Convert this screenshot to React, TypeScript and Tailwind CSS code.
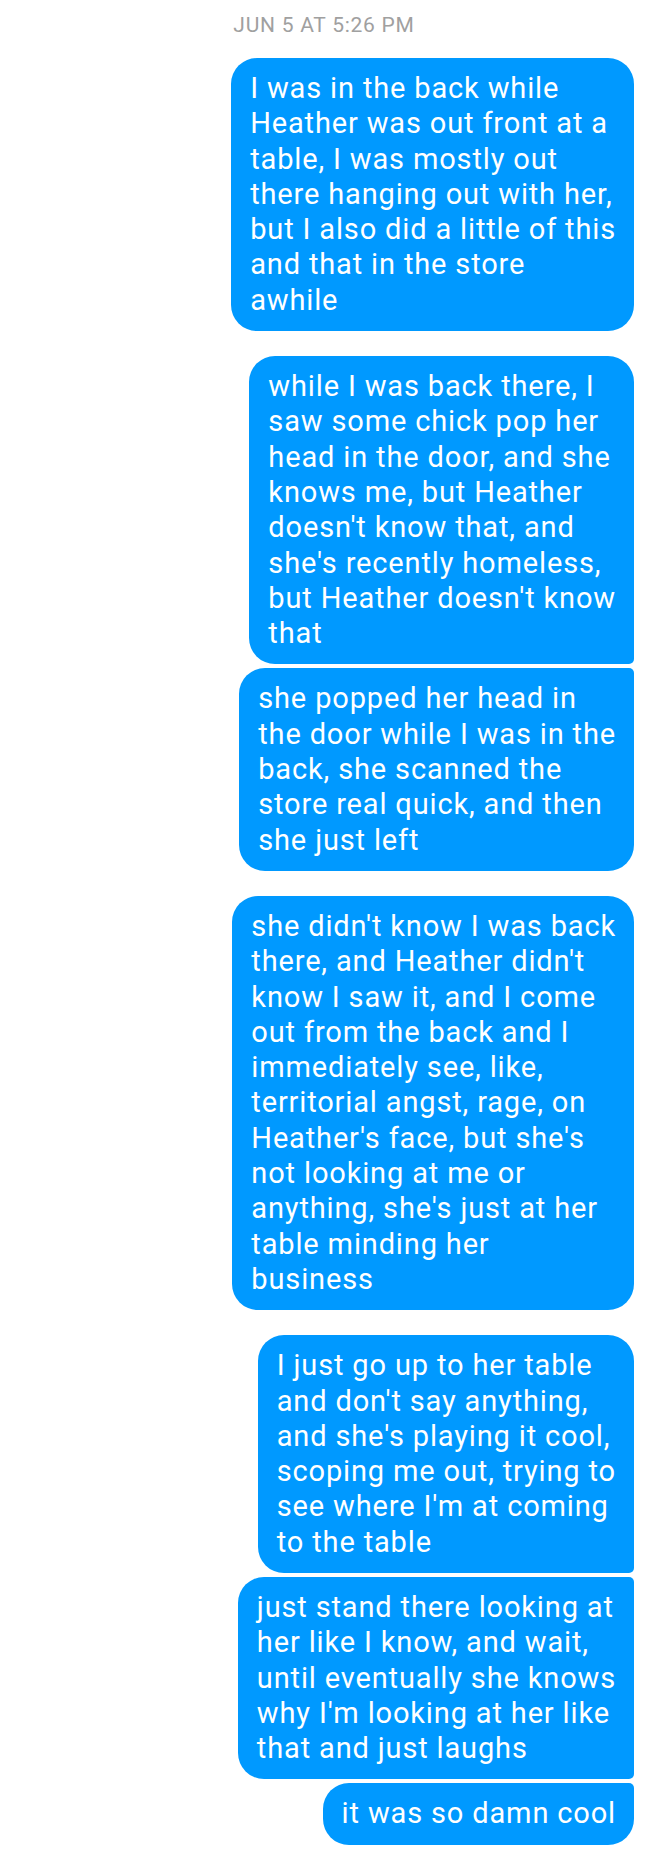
import React from 'react';

type Pos = 'single' | 'first' | 'middle' | 'last';

interface Message {
  id: number;
  lines: string[];
  pos: Pos;
}

// lines are written out as the phone wrapped them
const MESSAGES: Message[] = [
  {
    id: 1,
    pos: 'single',
    lines: [
      'I was in the back while',
      'Heather was out front at a',
      'table, I was mostly out',
      'there hanging out with her,',
      'but I also did a little of this',
      'and that in the store',
      'awhile',
    ],
  },
  {
    id: 2,
    pos: 'first',
    lines: [
      'while I was back there, I',
      'saw some chick pop her',
      'head in the door, and she',
      'knows me, but Heather',
      "doesn't know that, and",
      "she's recently homeless,",
      "but Heather doesn't know",
      'that',
    ],
  },
  {
    id: 3,
    pos: 'last',
    lines: [
      'she popped her head in',
      'the door while I was in the',
      'back, she scanned the',
      'store real quick, and then',
      'she just left',
    ],
  },
  {
    id: 4,
    pos: 'single',
    lines: [
      "she didn't know I was back",
      "there, and Heather didn't",
      'know I saw it, and I come',
      'out from the back and I',
      'immediately see, like,',
      'territorial angst, rage, on',
      "Heather's face, but she's",
      'not looking at me or',
      "anything, she's just at her",
      'table minding her',
      'business',
    ],
  },
  {
    id: 5,
    pos: 'first',
    lines: [
      'I just go up to her table',
      "and don't say anything,",
      "and she's playing it cool,",
      'scoping me out, trying to',
      "see where I'm at coming",
      'to the table',
    ],
  },
  {
    id: 6,
    pos: 'middle',
    lines: [
      'just stand there looking at',
      'her like I know, and wait,',
      'until eventually she knows',
      "why I'm looking at her like",
      'that and just laughs',
    ],
  },
  {
    id: 7,
    pos: 'last',
    lines: ['it was so damn cool'],
  },
];

const CORNERS: Record<Pos, string> = {
  single: 'rounded-[26px]',
  first: 'rounded-[26px] rounded-br-[5px]',
  middle: 'rounded-[26px] rounded-tr-[5px] rounded-br-[5px]',
  last: 'rounded-[26px] rounded-tr-[5px]',
};

function Bubble({ msg }: { msg: Message }) {
  return (
    <div className={`bg-[#0099ff] text-white pl-[19px] pr-[18px] py-[13px] ${CORNERS[msg.pos]}`}>
      {msg.lines.map((line, i) => (
        <div key={i} className="whitespace-nowrap text-[29px] leading-[35.3px] tracking-[0.85px]">
          {line}
        </div>
      ))}
    </div>
  );
}

export default function App() {
  return (
    <div
      className="min-h-screen bg-white pb-[18px]"
      style={{ fontFamily: 'Roboto, "Noto Sans", sans-serif' }}
    >
      <div className="h-[58px] flex justify-center pt-[12px]">
        <span className="text-[21px] leading-[27px] tracking-[0.75px] text-[#a0a0a0]">JUN 5 AT 5:26 PM</span>
      </div>

      <div className="flex flex-col items-end pr-[14px]">
        {MESSAGES.map((msg, i) => {
          const grouped = msg.pos === 'middle' || msg.pos === 'last';
          const gap = i === 0 ? '' : grouped ? 'mt-[4px]' : 'mt-[25px]';
          return (
            <div key={msg.id} className={gap}>
              <Bubble msg={msg} />
            </div>
          );
        })}
      </div>
    </div>
  );
}
